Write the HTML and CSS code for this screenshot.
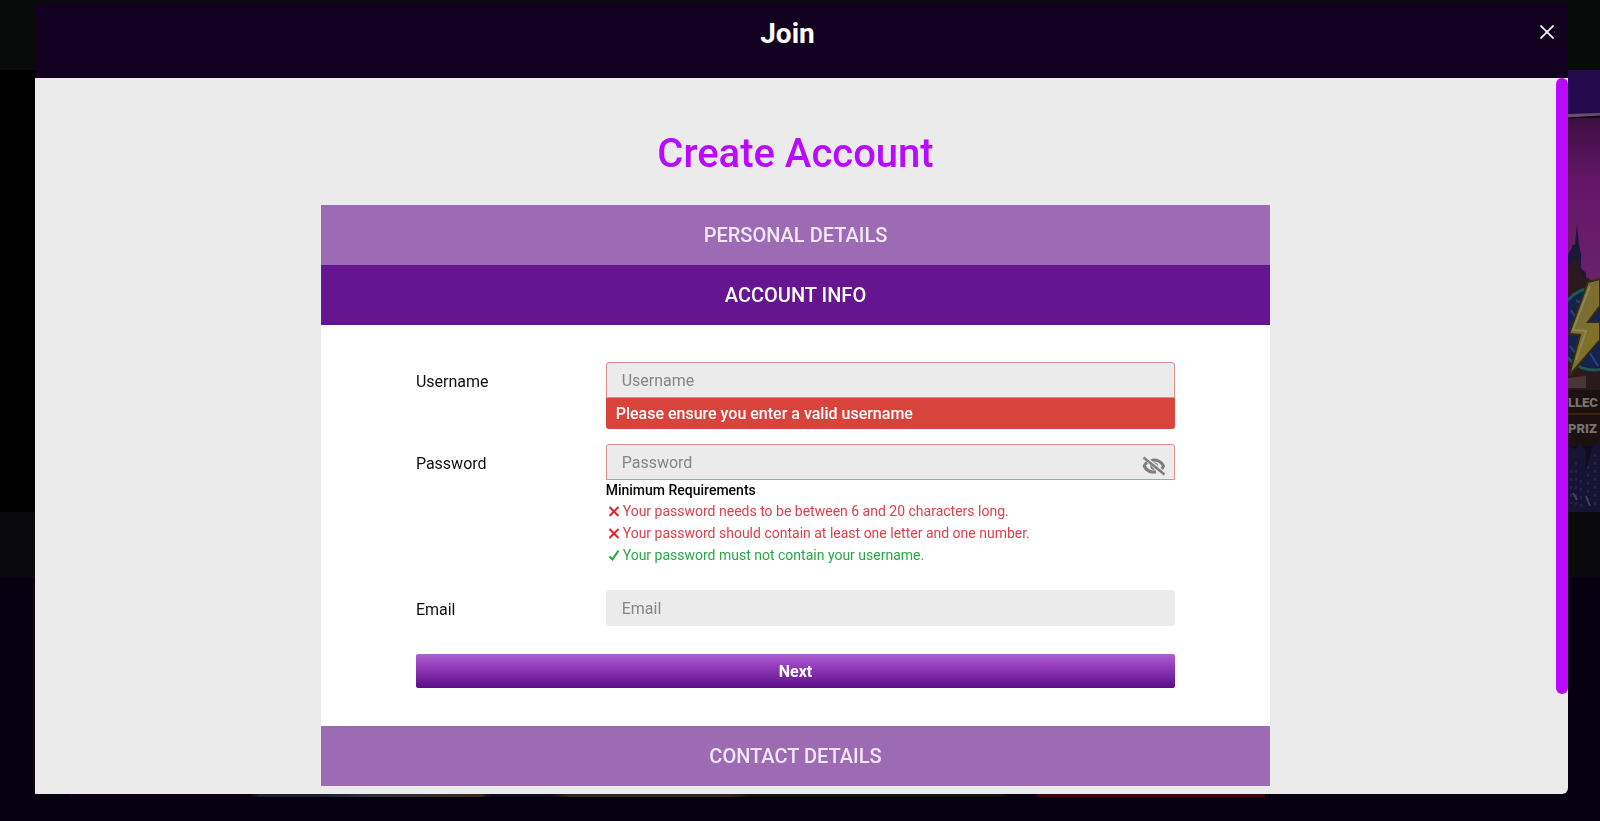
FILE: index.html
```html
<!DOCTYPE html>
<html lang="en">
<head>
  <meta charset="UTF-8" />
  <meta name="viewport" content="width=device-width, initial-scale=1" />
  <title>Join</title>
  <link rel="stylesheet" href="styles.css">
</head>
<body>

<!-- Dimmed page behind the modal -->
<div class="page" aria-hidden="true">
  <div class="topbar"></div>
  <div class="hero">
    <svg class="hero-art" viewBox="0 0 32 442" preserveAspectRatio="none">
      <defs>
        <linearGradient id="sky" x1="0" y1="0" x2="0" y2="1">
          <stop offset="0" stop-color="#3d0f42" />
          <stop offset="0.35" stop-color="#641769" />
          <stop offset="0.85" stop-color="#68216a" />
          <stop offset="1" stop-color="#562037" />
        </linearGradient>
        <linearGradient id="bolt" x1="0" y1="0" x2="1" y2="1">
          <stop offset="0" stop-color="#6f6844" />
          <stop offset="1" stop-color="#8a741c" />
        </linearGradient>
      </defs>
      <rect width="32" height="442" fill="#100b20" />
      <rect width="32" height="46" fill="#240b4d" />
      <rect y="48" width="32" height="185" fill="url(#sky)" />
      <path d="M0 44L32 43V46L0 48Z" fill="#6b4c72" />
      <path d="M0 48L32 46" stroke="#0b0610" />
      <path d="M0 184L4 178V175H7L9 154L11 175L13 184V198L18 203V240H0Z" fill="#1a1738" />
      <path d="M0 195L8 188L14 205L32 215V320H0Z" fill="#2a1a1d" />
      <ellipse cx="26" cy="259" rx="37" ry="41" fill="#14234b" stroke="#1c5752" stroke-width="3" />
      <path d="M3 240L10 252M2 276L12 290M20 280L30 296M8 230L16 236" stroke="#2a4285" stroke-width="2" />
      <path d="M20 212L32 209V236L20 252H32V270L1 306L12 265L1 264Z" fill="url(#bolt)" stroke="#322b16" stroke-width="2" />
      <path d="M22 216L5 260L18 261L8 290" fill="none" stroke="#8f864e" stroke-width="2" />
      <path d="M0 308L18 306V318H0Z" fill="#4a3537" />
      <rect y="320" width="32" height="56" fill="#1b1112" />
      <text class="hero-text" x="0" y="337">LLEC</text>
      <path d="M0 344H32" stroke="#3b240d" stroke-width="2" />
      <text class="hero-text" x="0" y="363">PRIZ</text>
      <path d="M0 376L8 379L12 372L18 382V398L25 376L32 372V442H0Z" fill="#171333" />
      <path d="M3 400V434M8 392V438M13 410V440M20 396V430M27 384V436" stroke="#25224f" stroke-width="2" stroke-dasharray="3 5" />
      <path d="M5 423L9 430M18 426L22 436" stroke="#443e68" stroke-width="2" />
    </svg>
  </div>
  <div class="strip"></div>
  <div class="tiles"></div>
</div>

<div class="modal" role="dialog" aria-modal="true" aria-labelledby="modal-title">
  <header class="modal-header">
    <h1 class="modal-title" id="modal-title">Join</h1>
    <button class="close-btn" type="button" aria-label="Close">
      <svg width="14" height="14" viewBox="0 0 14 14">
        <path d="M0.500 0.500L13.500 13.500M13.500 0.500L0.500 13.500" stroke="#fff" stroke-width="1.600" />
      </svg>
    </button>
  </header>

  <div class="modal-body">
    <div class="scroll-area">
      <h2 class="page-title">Create Account</h2>

      <div class="accordion">
        <button class="step" type="button" aria-expanded="false">PERSONAL DETAILS</button>
        <button class="step active" type="button" aria-expanded="true">ACCOUNT INFO</button>

        <form class="panel">
          <div class="row">
            <label for="username">Username</label>
            <div class="field">
              <input class="invalid" type="text" id="username" placeholder="Username" />
              <div class="error">Please ensure you enter a valid username</div>
            </div>
          </div>

          <div class="row">
            <label for="password">Password</label>
            <div class="field">
              <div class="password-box">
                <input class="invalid" type="password" id="password" placeholder="Password" />
                <button class="eye-btn" type="button" aria-label="Show password">
                  <svg width="24" height="24" viewBox="0 0 24 24">
                    <path fill="none" stroke="#7d7d7d" stroke-width="3" d="M8.500 7C14 4.500 19.500 7.500 21.500 12C21 13.700 20 15 18.500 16M5 8.500C3.500 9.600 2.600 10.800 2.200 12C4.500 16.800 9 18.600 14 17.700" />
                    <path fill="#7d7d7d" d="M10.500 8.500C14 7.500 17 10 16 14Z" />
                    <path fill="#7d7d7d" d="M8.300 11L13 15.800C10 16.500 7.700 14 8.300 11Z" />
                    <path stroke="#ebebeb" stroke-width="1.500" d="M3.500 2.500L23 18.500" />
                    <path stroke="#7d7d7d" stroke-width="2.400" d="M1.500 3.500L22.500 20.500" />
                  </svg>
                </button>
              </div>
              <p class="req-title">Minimum Requirements</p>
              <ul class="requirements">
                <li class="fail">
                  <svg width="11" height="11" viewBox="0 0 11 11"><path d="M0.500 1L9.500 10M9.500 1L0.500 10" /></svg>
                  Your password needs to be between 6 and 20 characters long.
                </li>
                <li class="fail">
                  <svg width="11" height="11" viewBox="0 0 11 11"><path d="M0.500 1L9.500 10M9.500 1L0.500 10" /></svg>
                  Your password should contain at least one letter and one number.
                </li>
                <li class="pass">
                  <svg width="11" height="11" viewBox="0 0 11 11"><path d="M0.500 6.500L3.500 9.500L9.500 0.500" /></svg>
                  Your password must not contain your username.
                </li>
              </ul>
            </div>
          </div>

          <div class="row">
            <label for="email">Email</label>
            <div class="field">
              <input type="email" id="email" placeholder="Email" />
            </div>
          </div>

          <button class="next-btn" type="button">Next</button>
        </form>

        <button class="step" type="button" aria-expanded="false">CONTACT DETAILS</button>
      </div>
    </div>
    <div class="scrollbar"><div class="scrollbar-thumb"></div></div>
  </div>
</div>

</body>
</html>
```
FILE: styles.css
```css
* {
  box-sizing: border-box;
}

body {
  margin: 0;
  height: 100vh;
  overflow: hidden;
  background: #070010;
  font-family: Roboto, Arial, sans-serif;
  font-size: 16px;
  color: #111;
}

h1, h2, p, ul {
  margin: 0;
  padding: 0;
}

button, input {
  font-family: inherit;
  border: none;
}

/* background page */
.page {
  height: 100%;
}

.topbar {
  height: 70px;
  background: #090a0a;
}

.hero {
  height: 442px;
  display: flex;
  justify-content: flex-end;
  background: #000;
}

.hero-art {
  width: 32px;
  height: 100%;
}

.hero-text {
  font-size: 13px;
  font-weight: 900;
  fill: #77736c;
}

.strip {
  height: 65px;
  background: #0a0a0c;
}

.tiles {
  height: 220px;
  margin: 0 335px 0 70px;
  background: linear-gradient(to right, #100015 0 180px, #1a2030 190px 250px, #2c3138 300px, #3a2b1c 410px, #0c0b20 420px 480px, #33271b 500px 660px, #14160c 680px 930px, #070010 940px 966px, #3d0710 968px);
}

/* modal */
.modal {
  position: fixed;
  top: 3px;
  right: 32px;
  bottom: 27px;
  left: 35px;
  display: flex;
  flex-direction: column;
  border-radius: 0 0 6px 0;
  overflow: hidden;
  background: #ebebeb;
}

.modal-header {
  display: flex;
  align-items: flex-start;
  height: 75px;
  flex-shrink: 0;
  padding: 15px 14px 0 0;
  background: #110020;
}

.modal-title {
  flex: 1;
  font-size: 28px;
  line-height: 32px;
  font-weight: 700;
  text-align: center;
  color: #fff;
}

.close-btn {
  display: flex;
  padding: 7px 0;
  background: none;
  cursor: pointer;
}

.modal-body {
  flex: 1;
  display: flex;
  min-height: 0;
}

.scroll-area {
  flex: 1;
  overflow-y: auto;
  scrollbar-width: none;
  padding: 48px 20px 126px;
}

.scrollbar {
  width: 12px;
}

.scrollbar-thumb {
  height: 86%;
  border-radius: 6px;
  background: #b90aff;
}

.page-title {
  margin-bottom: 23px;
  font-size: 40px;
  line-height: 56px;
  font-weight: 500;
  text-align: center;
  color: #b90aff;
}

.accordion {
  max-width: 949px;
  margin: 0 auto;
}

.step {
  display: block;
  width: 100%;
  height: 60px;
  background: #9c6bb4;
  font-size: 20px;
  font-weight: 500;
  color: #f3e6fa;
  cursor: pointer;
}

.step.active {
  background: #65158f;
  color: #fff;
}

.panel {
  padding: 37px 10% 38px;
  background: #fff;
}

.row {
  display: flex;
  margin-bottom: 15px;
}

.row label {
  width: 25%;
  line-height: 40px;
}

.field {
  width: 75%;
}

.field input {
  display: block;
  width: 100%;
  height: 36px;
  padding: 0 16px;
  border-radius: 3px;
  background: #ebebeb;
  font-size: 16px;
}

.field input::placeholder {
  color: #858585;
}

.field input.invalid {
  border: 1px solid #e08a8c;
  border-radius: 3px 3px 0 0;
  padding: 0 15px;
}

.error {
  padding: 0 10px;
  border-radius: 0 0 3px 3px;
  background: #d8433c;
  line-height: 31px;
  font-weight: 500;
  color: #fff;
}

.password-box {
  position: relative;
}

.eye-btn {
  position: absolute;
  right: 9px;
  bottom: 2px;
  display: flex;
  padding: 0;
  background: none;
  cursor: pointer;
}

.req-title {
  font-size: 14px;
  line-height: 20px;
  font-weight: 500;
  color: #000;
}

.requirements {
  margin-bottom: 9px;
  list-style: none;
  font-size: 14px;
  line-height: 22px;
}

.requirements li {
  display: flex;
  align-items: center;
  gap: 3px;
  padding-left: 3px;
}

.requirements svg {
  fill: none;
  stroke-width: 2;
}

.fail {
  color: #dc3f4c;
}

.fail svg {
  stroke: #e0242c;
}

.pass {
  color: #28a745;
}

.pass svg {
  stroke: #1faa3c;
}

.next-btn {
  display: block;
  width: 100%;
  height: 34px;
  margin-top: 24px;
  border-radius: 2px;
  background: linear-gradient(#a965cb, #a046c6 25%, #5a0c86);
  font-size: 16px;
  font-weight: 700;
  color: #fff;
  cursor: pointer;
}
```
